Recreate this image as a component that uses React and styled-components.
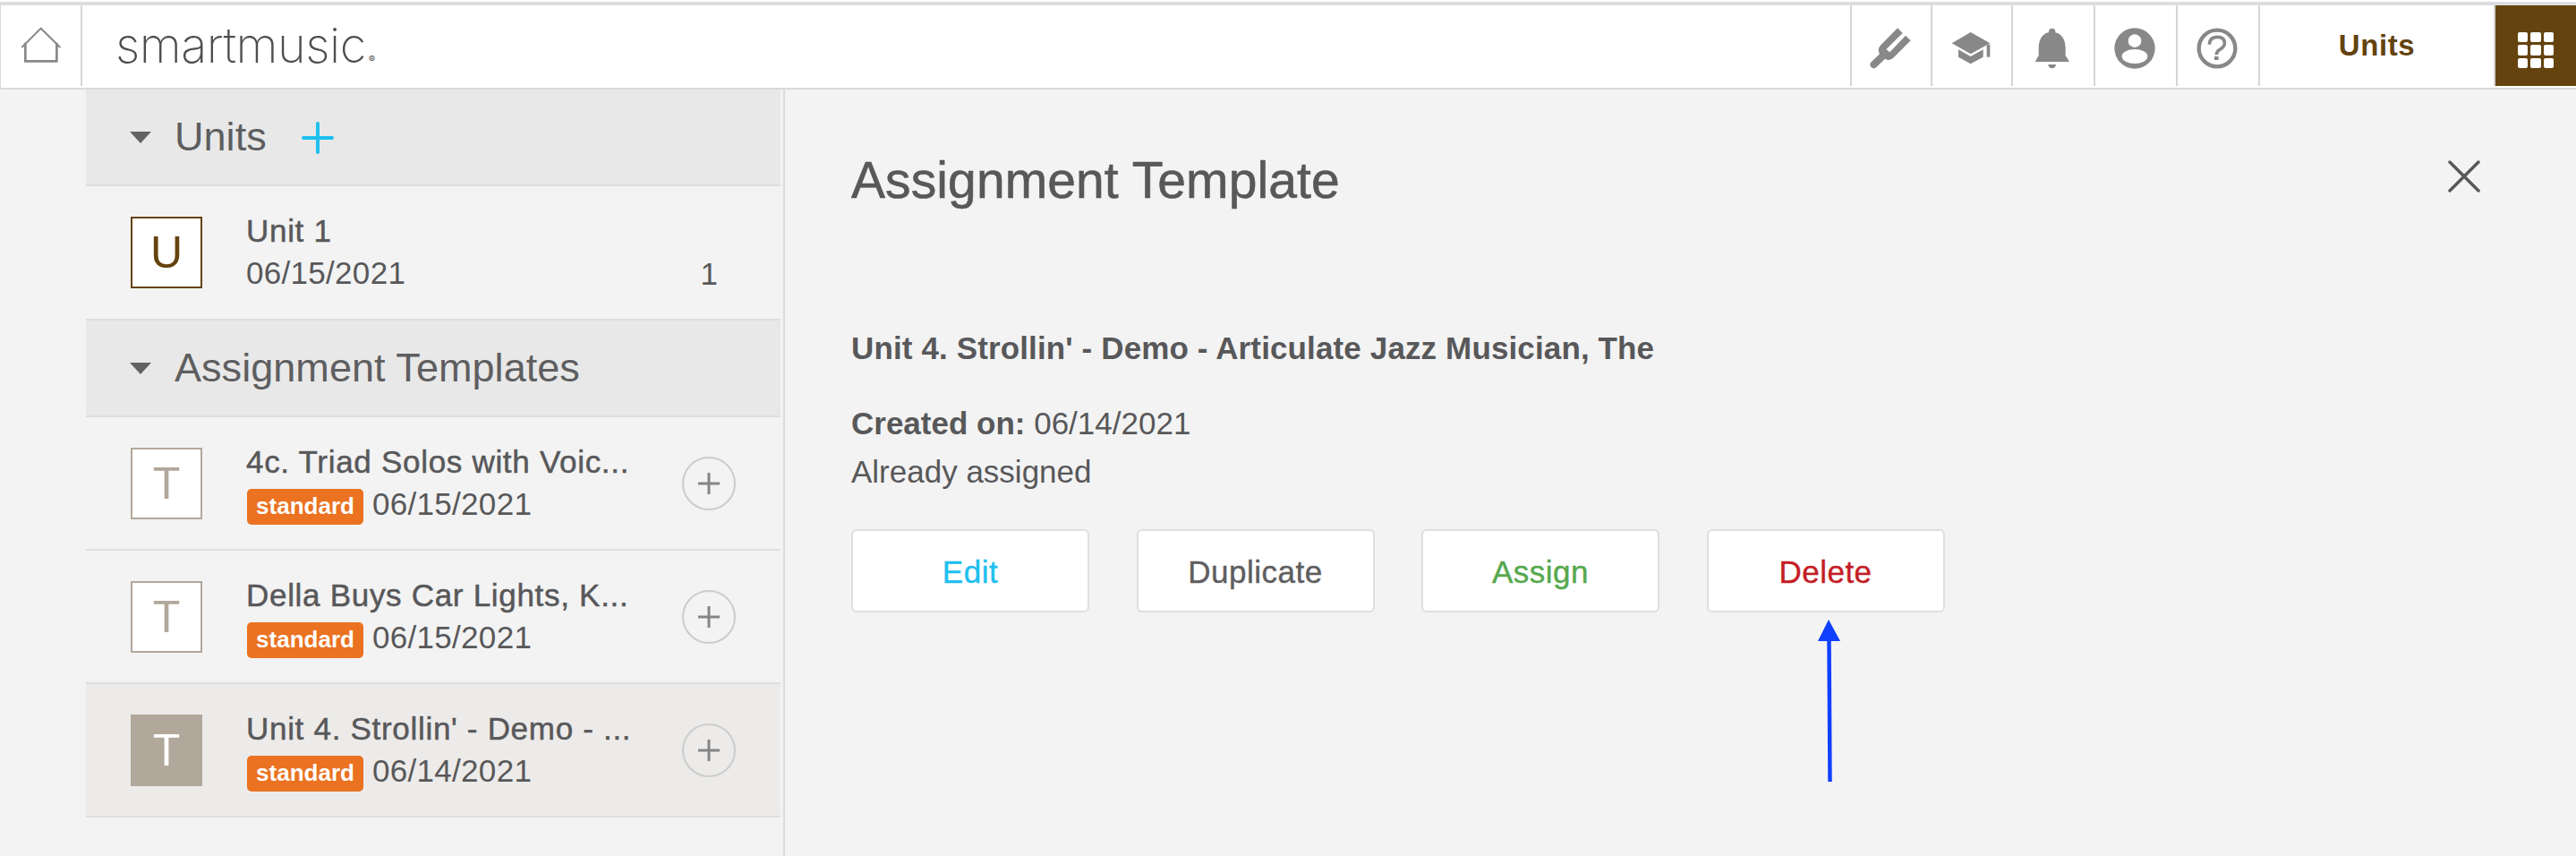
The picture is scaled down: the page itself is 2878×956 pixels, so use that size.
import React from "react";
import styled, { createGlobalStyle } from "styled-components";

const Global = createGlobalStyle`
  html, body { margin: 0; padding: 0; background: #f3f3f3; }
  body { font-family: "Liberation Sans", Arial, sans-serif; color: #58585a; }
  * { box-sizing: border-box; }
`;

const Page = styled.div`
  position: relative;
  width: 2878px;
  height: 956px;
  overflow: hidden;
  background: #f3f3f3;
`;

const TopGap = styled.div`
  height: 2px;
  background: #fff;
`;

const TopBar = styled.header`
  display: flex;
  height: 98px;
  border-top: 4px solid #dcdde0;
  border-bottom: 2px solid #dcd9d7;
  padding-bottom: 2px;
  padding-left: 1px;
  background: #fff;
  box-shadow: inset 1px 0 0 #dcd9d7;
`;

const HomeCell = styled.div`
  width: 91px;
  display: flex;
  align-items: center;
  justify-content: center;
  border-right: 2px solid #d8d5d2;
`;

const Logo = styled.div`
  flex: 1;
  padding-left: 37px;
  font-family: "Inter", sans-serif;
  font-weight: 200;
  font-size: 54px;
  letter-spacing: -0.5px;
  line-height: 90px;
  color: #4e4e50;
`;

const Reg = styled.span`
  font-size: 11px;
  letter-spacing: 0;
  margin-left: 3px;
  font-weight: 400;
`;

const IconCell = styled.div`
  width: ${(p) => p.$w}px;
  display: flex;
  align-items: center;
  justify-content: center;
  padding: 5px 3px 0 0;
  border-left: 2px solid #d8d5d2;
`;

const UnitsCell = styled.div`
  width: 263px;
  border-left: 2px solid #d8d5d2;
  display: flex;
  align-items: center;
  justify-content: center;
  color: #64430f;
  font-weight: 700;
  font-size: 33px;
  letter-spacing: 0.6px;
`;

const GridCell = styled.div`
  width: 92px;
  border-left: 2px solid #d8d5d2;
  background: #64430f;
  background-clip: padding-box;
  display: flex;
  align-items: center;
  justify-content: center;
  padding-top: 10px;
`;

const Dots = styled.div`
  display: grid;
  grid-template-columns: repeat(3, 11.5px);
  grid-auto-rows: 11.5px;
  gap: 3px;
`;

const Dot = styled.span`
  background: #fff;
  border-radius: 2px;
`;

const Body = styled.div`
  display: flex;
  height: 856px;
`;

const Sidebar = styled.aside`
  width: 877px;
  padding: 0 3px 0 96px;
  border-right: 2px solid #dcdcdc;
`;

const SectionHead = styled.div`
  display: flex;
  align-items: center;
  height: 108px;
  padding-left: 49px;
  background: #e8e8e8;
  border-bottom: 2px solid #dedede;
`;

const Caret = styled.span`
  width: 0;
  height: 0;
  border-left: 12.5px solid transparent;
  border-right: 12.5px solid transparent;
  border-top: 13px solid #636363;
  margin-right: 26px;
`;

const SectionTitle = styled.h2`
  margin: 0;
  font-size: 45px;
  font-weight: 400;
  line-height: 50px;
  letter-spacing: 0.05px;
  color: #5e5e60;
`;

const AddIcon = styled.svg`
  width: 36px;
  height: 36px;
  margin-left: 39px;
  margin-top: 2px;
`;

const Row = styled.div`
  display: flex;
  align-items: center;
  height: ${(p) => p.$h}px;
  padding: 0 50px;
  border-bottom: 2px solid #dedede;
  background: ${(p) => (p.$active ? "#edebe9" : "transparent")};
`;

const Thumb = styled.div`
  width: 80px;
  height: 80px;
  flex: none;
  display: flex;
  align-items: center;
  justify-content: center;
  font-size: 50px;
  line-height: 1;
  border: 2px solid ${(p) => p.$color};
  color: ${(p) => (p.$filled ? "#fff" : p.$color)};
  background: ${(p) => (p.$filled ? p.$color : "#fff")};
`;

const RowText = styled.div`
  flex: 1;
  min-width: 0;
  margin-left: 49px;
`;

const RowTitle = styled.div`
  font-size: 35px;
  line-height: 46px;
  letter-spacing: 0.7px;
  white-space: nowrap;
  -webkit-text-stroke: 0.5px #58585a;
`;

const Meta = styled.div`
  display: flex;
  align-items: center;
  height: 48px;
  font-size: 35px;
  letter-spacing: 0.3px;
`;

const Badge = styled.span`
  width: 130px;
  height: 40px;
  margin: 7px 10px 0 1px;
  border-radius: 5px;
  background: #ea7220;
  color: #fff;
  font-size: 26px;
  font-weight: 700;
  letter-spacing: 0;
  line-height: 39px;
  text-align: center;
`;

const Count = styled.span`
  font-size: 35px;
  align-self: flex-end;
  margin-bottom: 30px;
  margin-right: 20px;
`;

const RoundAdd = styled.div`
  width: 60px;
  height: 60px;
  flex: none;
  border: 2px solid #cccccc;
  border-radius: 50%;
  display: flex;
  align-items: center;
  justify-content: center;
`;

const Main = styled.main`
  flex: 1;
  padding-left: 74px;
  position: relative;
`;

const HeadRow = styled.div`
  display: flex;
  align-items: flex-start;
  justify-content: space-between;
  padding: 71px 107px 0 0;
  height: 262px;
`;

const MainTitle = styled.h1`
  margin: 0;
  font-size: 57px;
  line-height: 60px;
  font-weight: 400;
  letter-spacing: 0.1px;
  -webkit-text-stroke: 0.6px #58585a;
`;

const CloseIcon = styled.svg`
  width: 36px;
  height: 36px;
  margin-top: 8px;
`;

const ItemTitle = styled.div`
  font-size: 35px;
  font-weight: 700;
  line-height: 40px;
  letter-spacing: 0.13px;
  margin-top: 7px;
`;

const InfoLine = styled.div`
  font-size: 35px;
  line-height: 54px;
  ${(p) => p.$first && "margin-top: 37px;"}
`;

const Strong = styled.b`
  font-weight: 700;
`;

const Actions = styled.div`
  display: flex;
  gap: 52.5px;
  margin-top: 37px;
`;

const ActionButton = styled.button`
  width: 266px;
  height: 93px;
  padding: 2px 0 0;
  background: #fff;
  border: 2px solid #dedede;
  border-radius: 6px;
  font-family: inherit;
  font-size: 35px;
  letter-spacing: 0.5px;
  color: ${(p) => p.$color};
  -webkit-text-stroke: 0.4px ${(p) => p.$color};
`;

const ArrowOverlay = styled.svg`
  position: absolute;
  left: 2020px;
  top: 685px;
  width: 50px;
  height: 195px;
`;

const Home = () => (
  <svg width="46" height="42" viewBox="70 95 138 126" fill="none" stroke="#888" strokeWidth="7">
    <path d="M74 164 L138 100 L203 164" strokeWidth="6" />
    <path d="M86 148 V210 H191 V148" strokeWidth="8" />
  </svg>
);

const Fork = () => (
  <svg width="46" height="46" viewBox="55 32 138 138" fill="#888">
    <path d="M148 33 L165 50 L110 104 L122 114 L175 58 L192 75 L135 132 Q122 146 106 136 L77 164 A12 12 0 0 1 60 147 L88 120 Q78 104 92 90 Z" />
  </svg>
);

const Cap = () => (
  <svg width="44" height="38" viewBox="328 45 132 112" fill="#888">
    <path d="M393 47 L458 84 L393 120 L330 84 Z" />
    <path d="M352 105 L393 128 L435 105 V130 L393 153 L352 130 Z" />
    <rect x="447" y="88" width="11" height="42" />
  </svg>
);

const Bell = () => (
  <svg width="40" height="46" viewBox="608 32 120 136" fill="#888">
    <circle cx="667" cy="44" r="11" />
    <path d="M667 45 C635 45 622 70 622 100 V124 L610 145 H725 L712 124 V100 C712 70 699 45 667 45 Z" />
    <path d="M654 154 H680 Q678 167 667 167 Q656 167 654 154 Z" />
  </svg>
);

const Person = () => (
  <svg width="46" height="46" viewBox="66 31 138 138">
    <defs>
      <clipPath id="avatar-clip"><circle cx="135" cy="100" r="68" /></clipPath>
    </defs>
    <circle cx="135" cy="100" r="68" fill="#888" />
    <circle cx="135" cy="75" r="22" fill="#fff" />
    <ellipse cx="135" cy="127" rx="43" ry="24" fill="#fff" clipPath="url(#avatar-clip)" />
  </svg>
);

const Help = () => (
  <svg width="46" height="46" viewBox="344 31 138 138" fill="none" stroke="#888">
    <circle cx="413" cy="100" r="61" strokeWidth="13" />
    <path d="M387 87 Q388 62 413 62 Q439 62 438 84 Q437 96 422 104 Q411 110 411 122" strokeWidth="11" />
    <rect x="404" y="127" width="14" height="12" fill="#888" stroke="none" />
  </svg>
);

const RowPlus = () => (
  <svg width="26" height="26" viewBox="0 0 26 26" fill="none" stroke="#858585" strokeWidth="3">
    <path d="M13 1 V25 M1 13 H25" />
  </svg>
);

const rows = [
  { title: "4c. Triad Solos with Voic...", date: "06/15/2021" },
  { title: "Della Buys Car Lights, K...", date: "06/15/2021" },
  { title: "Unit 4. Strollin' - Demo - ...", date: "06/14/2021", active: true },
];

export default function App() {
  return (
    <Page>
      <Global />
      <TopGap />
      <TopBar>
        <HomeCell><Home /></HomeCell>
        <Logo>smartmusic<Reg>®</Reg></Logo>
        <IconCell $w={90}><Fork /></IconCell>
        <IconCell $w={90}><Cap /></IconCell>
        <IconCell $w={92}><Bell /></IconCell>
        <IconCell $w={92}><Person /></IconCell>
        <IconCell $w={92}><Help /></IconCell>
        <UnitsCell>Units</UnitsCell>
        <GridCell>
          <Dots>
            {Array.from({ length: 9 }).map((_, i) => <Dot key={i} />)}
          </Dots>
        </GridCell>
      </TopBar>
      <Body>
        <Sidebar>
          <SectionHead>
            <Caret />
            <SectionTitle>Units</SectionTitle>
            <AddIcon viewBox="0 0 36 36" fill="none" stroke="#1ec0ee" strokeWidth="4" strokeLinecap="round">
              <path d="M18 2 V34 M2 18 H34" />
            </AddIcon>
          </SectionHead>
          <Row $h={150}>
            <Thumb $color="#64430f">U</Thumb>
            <RowText>
              <RowTitle>Unit 1</RowTitle>
              <Meta>06/15/2021</Meta>
            </RowText>
            <Count>1</Count>
          </Row>
          <SectionHead>
            <Caret />
            <SectionTitle>Assignment Templates</SectionTitle>
          </SectionHead>
          {rows.map((r) => (
            <Row key={r.title} $h={149} $active={r.active}>
              <Thumb $color="#b1a79a" $filled={r.active}>T</Thumb>
              <RowText>
                <RowTitle>{r.title}</RowTitle>
                <Meta><Badge>standard</Badge>{r.date}</Meta>
              </RowText>
              <RoundAdd><RowPlus /></RoundAdd>
            </Row>
          ))}
        </Sidebar>
        <Main>
          <HeadRow>
            <MainTitle>Assignment Template</MainTitle>
            <CloseIcon viewBox="0 0 36 36" fill="none" stroke="#58585a" strokeWidth="3.5" strokeLinecap="round">
              <path d="M2 2 L34 34 M34 2 L2 34" />
            </CloseIcon>
          </HeadRow>
          <ItemTitle>Unit 4. Strollin' - Demo - Articulate Jazz Musician, The</ItemTitle>
          <InfoLine $first><Strong>Created on:</Strong> 06/14/2021</InfoLine>
          <InfoLine>Already assigned</InfoLine>
          <Actions>
            <ActionButton $color="#1ec0ee">Edit</ActionButton>
            <ActionButton $color="#5e5e60">Duplicate</ActionButton>
            <ActionButton $color="#56a84e">Assign</ActionButton>
            <ActionButton $color="#c41e26">Delete</ActionButton>
          </Actions>
        </Main>
      </Body>
      <ArrowOverlay viewBox="0 0 50 195">
        <path d="M23 7 L36 31 H11 Z" fill="#1040ff" />
        <path d="M23.5 30 L24.5 188" stroke="#1040ff" strokeWidth="4.5" fill="none" />
      </ArrowOverlay>
    </Page>
  );
}
